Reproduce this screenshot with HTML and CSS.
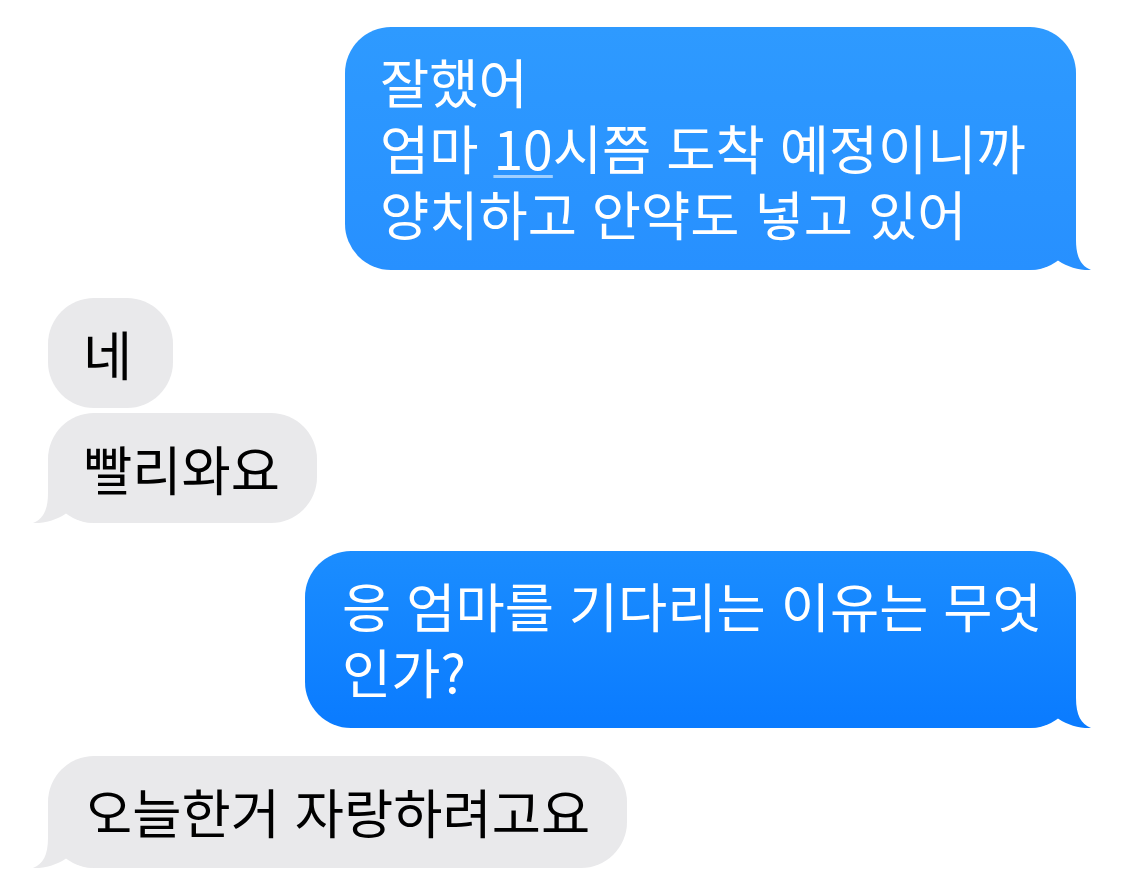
FILE: index.html
```html
<!DOCTYPE html>
<html lang="ko">
<head>
<meta charset="utf-8">
<title>Messages</title>
<link rel="stylesheet" href="styles.css">
</head>
<body>
<main class="thread">
  <div class="bubble sent sent-top">
    <span class="line">잘했어</span>
    <span class="line">엄마 <span class="detect">10</span>시쯤 도착 예정이니까</span>
    <span class="line">양치하고 안약도 넣고 있어</span>
    <svg class="tail tail-sent" viewBox="-50 -50 66 50" aria-hidden="true">
      <defs>
        <linearGradient id="g-top" gradientUnits="userSpaceOnUse" x1="0" y1="-243" x2="0" y2="0">
          <stop offset="0" stop-color="#2e9aff"/>
          <stop offset="1" stop-color="#2790ff"/>
        </linearGradient>
      </defs>
      <path fill="url(#g-top)" d="M -50 -50 H 0 V -30 C 0 -13 5 -4 15 0 C 4 1 -12 -4 -20 -11 C -27 -3 -36 0 -50 0 Z"/>
    </svg>
  </div>

  <div class="bubble recv short group-start"><span class="line">네</span></div>
  <div class="bubble recv stacked">
    <span class="line">빨리와요</span>
    <svg class="tail tail-recv" viewBox="-50 -50 66 50" aria-hidden="true"><path d="M -50 -50 H 0 V -30 C 0 -13 5 -4 15 0 C 4 1 -12 -4 -20 -11 C -27 -3 -36 0 -50 0 Z"/></svg>
  </div>

  <div class="bubble sent sent-bottom group-start">
    <span class="line">응 엄마를 기다리는 이유는 무엇</span>
    <span class="line">인가?</span>
    <svg class="tail tail-sent" viewBox="-50 -50 66 50" aria-hidden="true">
      <defs>
        <linearGradient id="g-bottom" gradientUnits="userSpaceOnUse" x1="0" y1="-177" x2="0" y2="0">
          <stop offset="0" stop-color="#1b8dff"/>
          <stop offset="1" stop-color="#0a7bff"/>
        </linearGradient>
      </defs>
      <path fill="url(#g-bottom)" d="M -50 -50 H 0 V -30 C 0 -13 5 -4 15 0 C 4 1 -12 -4 -20 -11 C -27 -3 -36 0 -50 0 Z"/>
    </svg>
  </div>

  <div class="bubble recv last group-start">
    <span class="line">오늘한거 자랑하려고요</span>
    <svg class="tail tail-recv" viewBox="-50 -50 66 50" aria-hidden="true"><path d="M -50 -50 H 0 V -30 C 0 -13 5 -4 15 0 C 4 1 -12 -4 -20 -11 C -27 -3 -36 0 -50 0 Z"/></svg>
  </div>
</main>
</body>
</html>
```

FILE: styles.css
```css
html, body {
  margin: 0;
  padding: 0;
  background: #ffffff;
}

.thread {
  display: flex;
  flex-direction: column;
  padding: 27px 49px 0 48px;
  font-family: "Noto Sans CJK KR", "Noto Sans", sans-serif;
  font-size: 53.5px;
  line-height: 66px;
}

.bubble {
  position: relative;
  box-sizing: border-box;
  padding: 22px 37px 22px 35px;
  border-radius: 46px;
  white-space: nowrap;
}

.line {
  display: block;
  height: 66px;
}

.sent {
  align-self: flex-end;
  color: #ffffff;
}

.sent-top {
  width: 731px;
  padding-top: 21px;
  padding-bottom: 24px;
  background: linear-gradient(#2e9aff, #2790ff);
}

.sent-bottom {
  width: 771px;
  padding-left: 37px;
  padding-top: 21px;
  padding-bottom: 24px;
  background: linear-gradient(#1b8dff, #0a7bff);
}

.recv {
  align-self: flex-start;
  background: #e9e9eb;
  color: #000000;
}

.recv .tail {
  fill: #e9e9eb;
}

.short {
  min-width: 125px;
}

.last {
  padding-bottom: 24px;
}

.group-start {
  margin-top: 28px;
}

.stacked {
  margin-top: 5px;
}

.tail {
  position: absolute;
  bottom: 0;
  width: 66px;
  height: 50px;
}

.tail-sent {
  right: -16px;
}

.tail-recv {
  left: -16px;
  transform: scaleX(-1);
}

.detect {
  text-decoration: underline;
  text-decoration-color: rgba(255, 255, 255, 0.55);
  text-decoration-thickness: 3px;
  text-underline-offset: 5px;
}
```
